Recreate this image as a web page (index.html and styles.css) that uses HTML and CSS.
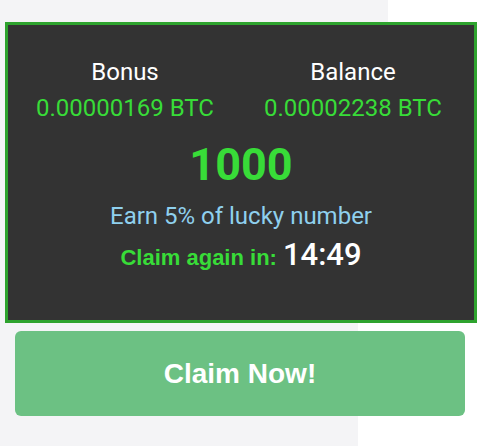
FILE: index.html
```html
<!DOCTYPE html>
<html lang="en">
<head>
  <meta charset="UTF-8" />
  <meta name="viewport" content="width=device-width, initial-scale=1.0"/>
  <title>Faucet Claim</title>
  <link rel="stylesheet" href="styles.css">
</head>
<body>

  <div class="faucet-card">
    <div class="stats">
      <div class="stat">
        <div class="stat-label">Bonus</div>
        <div class="stat-value">0.00000169 BTC</div>
      </div>
      <div class="stat">
        <div class="stat-label">Balance</div>
        <div class="stat-value">0.00002238 BTC</div>
      </div>
    </div>

    <div class="lucky-number">1000</div>
    <div class="earn-note">Earn 5% of lucky number</div>
    <div class="countdown">
      <span class="countdown-label">Claim again in:</span>
      <span class="countdown-time">14:49</span>
    </div>
  </div>

  <button class="claim-btn" type="button">Claim Now!</button>

</body>
</html>
```

FILE: styles.css
```css
:root {
  --page-bg: #f4f4f6;
  --card-bg: #333333;
  --card-border: #2ea32e;
  --green-text: #38dc38;
  --label-color: #ffffff;
  --note-color: #8fd0ee;
  --button-bg: #6cc183;
}

* {
  margin: 0;
  padding: 0;
  box-sizing: border-box;
}

body {
  font-family: Roboto, "Noto Sans", sans-serif;
  background: linear-gradient(to right, var(--page-bg) 388px, #ffffff 388px) top / 100% 22px no-repeat,
              linear-gradient(to right, var(--page-bg) 358px, #ffffff 358px);
  padding: 22px 3px 0 5px;
}

.faucet-card {
  background-color: var(--card-bg);
  border: 3px solid var(--card-border);
  padding: 29px 0 40px;
  text-align: center;
}

.stats {
  display: grid;
  grid-template-columns: 1fr 1fr;
  padding: 0 7px 0 3px;
}

.stat-label {
  color: var(--label-color);
  font-size: 24px;
  line-height: 36px;
}

.stat-value {
  color: var(--green-text);
  font-size: 24px;
  line-height: 36px;
}

.lucky-number {
  margin-top: 14px;
  color: var(--green-text);
  font-size: 45px;
  font-weight: bold;
  line-height: 50px;
}

.earn-note {
  margin-top: 8px;
  color: var(--note-color);
  font-size: 24px;
  line-height: 36px;
}

.countdown {
  margin-top: 1px;
  line-height: 40px;
}

.countdown-label {
  color: var(--green-text);
  font-family: "Liberation Sans", Arial, sans-serif;
  font-size: 22px;
  font-weight: bold;
}

.countdown-time {
  color: #ffffff;
  font-size: 31px;
  font-weight: 500;
  margin-left: 2px;
}

.claim-btn {
  display: block;
  width: 450px;
  height: 85px;
  margin: 8px 0 0 10px;
  background-color: var(--button-bg);
  border: none;
  border-radius: 6px;
  color: #ffffff;
  font-family: "Liberation Sans", Arial, sans-serif;
  font-size: 28px;
  font-weight: bold;
  cursor: pointer;
}
```
